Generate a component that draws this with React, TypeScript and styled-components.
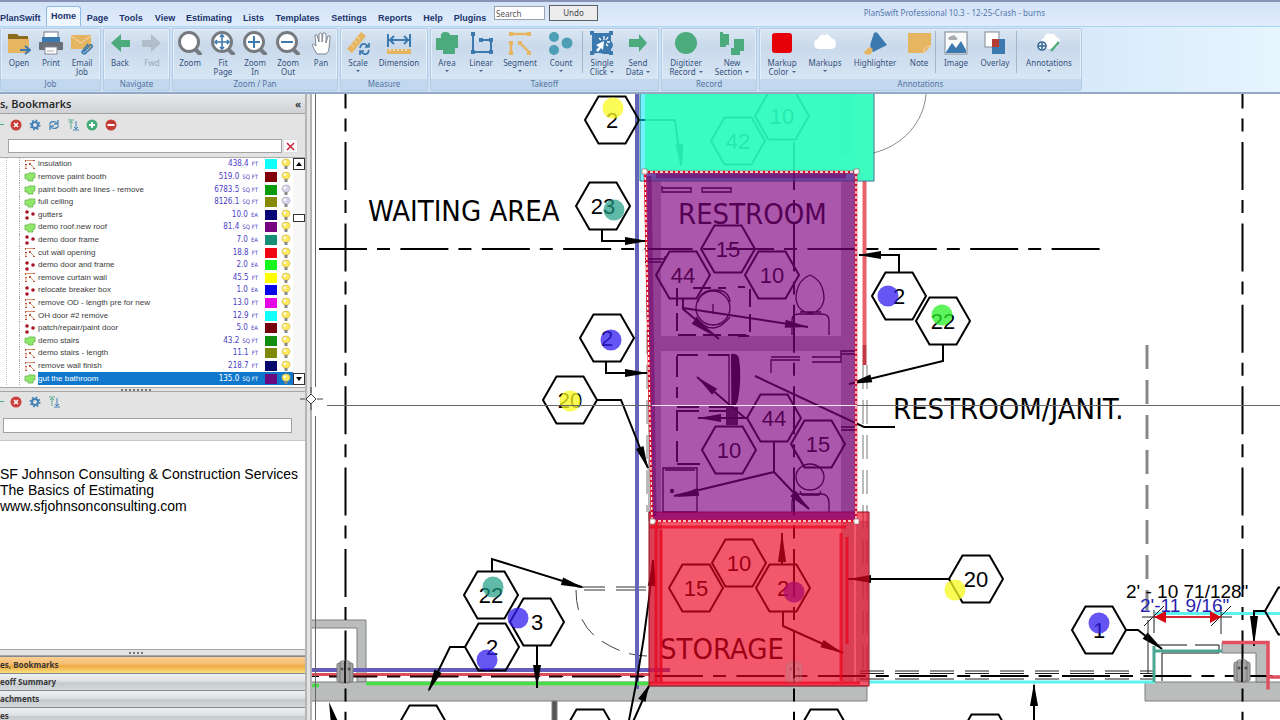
import React from "react";
import styled, { createGlobalStyle } from "styled-components";

const GlobalStyle = createGlobalStyle`
  * { box-sizing: border-box; }
  html, body, #root { height: 100%; }
  body { margin: 0; overflow: hidden; background: #fff; font-family: "Noto Sans", "Open Sans", sans-serif; }
  button, input { font: inherit; margin: 0; padding: 0; }
`;

const Page = styled.div`
  display: flex;
  flex-direction: column;
  height: 100vh;
`;

/* ---------- ribbon ---------- */
const Header = styled.header`
  flex: none;
  background: linear-gradient(#d3e2f6, #e2eefc 30%);
  border-top: 2px solid #8792b4;
  border-bottom: 2px solid #93a9c6;
`;
const TabRow = styled.div`
  display: flex;
  height: 24px;
`;
const Tabs = styled.nav`
  display: flex;
  align-items: flex-end;
`;
const Tab = styled.button<{ $active?: boolean; $flush?: boolean; $width: number }>`
  width: ${(p) => p.$width}px;
  height: ${(p) => (p.$active ? 20 : 18)}px;
  padding-bottom: ${(p) => (p.$active ? 2 : 0)}px;
  border: 1px solid ${(p) => (p.$active ? "#8fb9e6" : "transparent")};
  border-bottom: 0;
  border-left-width: ${(p) => (p.$flush ? 0 : 1)}px;
  border-radius: 3px 3px 0 0;
  background: ${(p) => (p.$active ? "#f1f7fe" : "transparent")};
  color: #20346c;
  font: bold 9px/14px "Liberation Sans", sans-serif;
  white-space: nowrap;
  display: flex;
  justify-content: ${(p) => (p.$flush ? "flex-start" : "center")};
  align-items: center;
`;
const SearchBox = styled.input`
  width: 51px;
  height: 14px;
  margin: 4px 4px 0 4px;
  padding: 0 1px;
  border: 1px solid #9aa3ae;
  background: #fff;
  font-size: 8px;
  &::placeholder { color: #555; opacity: 1; }
`;
const UndoButton = styled.button`
  width: 49px;
  height: 16px;
  margin-top: 3px;
  border: 1px solid #5c6168;
  background: #ededee;
  color: #444;
  font-size: 8px;
  line-height: 12px;
`;
const WindowTitle = styled.h1`
  flex: 1;
  margin: 0 64px 0 0;
  padding-right: 171px;
  color: #5477ab;
  font-size: 8px;
  font-weight: 400;
  line-height: 22px;
  text-align: right;
  white-space: nowrap;
`;
const Ribbon = styled.div`
  display: flex;
  gap: 2px;
  height: 66px;
  padding: 1px 0;
  border-top: 1px solid #a9d4f3;
  background: linear-gradient(90deg, #cfe0f3 70%, #d9ebfb 86%, #e6f5fe);
`;
const GroupBox = styled.section<{ $width: number }>`
  display: flex;
  flex-direction: column;
  flex: none;
  width: ${(p) => p.$width}px;
  border: 1px solid #b2cce6;
  border-radius: 2px;
  background: linear-gradient(#dbe6f2, #c9d9eb 28%, #dbe9f6 95%);
  box-shadow: inset 0 0 0 1px #e4eff9;
`;
const Tools = styled.div`
  display: flex;
  flex: 1;
  padding-top: 2px;
`;
const Caption = styled.h2`
  margin: 0;
  height: 11px;
  background: #c2d8ef;
  color: #55749f;
  font-size: 8px;
  font-weight: 400;
  line-height: 10px;
  text-align: center;
`;
const ToolButton = styled.button<{ $width: number; $dim?: boolean }>`
  display: flex;
  flex-direction: column;
  align-items: center;
  gap: 3px;
  width: ${(p) => p.$width}px;
  border: 0;
  background: none;
  color: ${(p) => (p.$dim ? "#9aa8ba" : "#34517d")};
  font-size: 8px;
  line-height: 9px;
  white-space: pre;
`;
const Divider = styled.span`
  width: 1px;
  height: 42px;
  margin: 0 1px;
  background: #a5b4c6;
`;
const Arrow = styled.i<{ $inline?: boolean }>`
  display: ${(p) => (p.$inline ? "inline-block" : "block")};
  width: 0;
  margin: ${(p) => (p.$inline ? "0 0 2px 3px" : "3px auto 0")};
  border: 2px solid transparent;
  border-top-color: #4a6288;
  border-bottom: 0;
`;

const G = "#4cab7c", B = "#3c79ae", Y = "#e5b562", K = "#777b80", T = "#4d9fb5";

const Lens = ({ children }: { children?: React.ReactNode }) => (
  <>
    <path d="M16 17 22 23" stroke={K} strokeWidth="4" strokeLinecap="round" />
    <circle cx="11" cy="11" r="9.5" fill="#fff" stroke={K} strokeWidth="3" />
    <g stroke={B} strokeWidth="1.6" fill="none">{children}</g>
  </>
);

const icons: Record<string, React.ReactNode> = {
  open: <><path d="M1 3h9l2 2h9v6H1z" fill="#8a6a1c" /><path d="M1 8h21v14H1z" fill={Y} /><path d="M13 19h9M18 15l5 4-5 4" stroke={B} strokeWidth="2.2" fill="none" /></>,
  print: <><rect x="5" y="1" width="14" height="7" fill="#fff" stroke="#778" /><path d="M3 6h18v6H3z" fill={B} /><rect y="11" width="24" height="8" rx="1" fill="#696f76" /><rect x="6" y="16" width="12" height="7" fill="#fff" stroke="#889" /><path d="M8 20h7" stroke="#aaa" /></>,
  mail: <><rect x="1" y="4" width="20" height="14" fill={Y} /><path d="m1 5 10 7 10-7" stroke="#f4dcae" fill="none" /><path d="m14 21 6-7q3-1 2 2l-6 6q-3 2-4-1l6-8" stroke={B} strokeWidth="1.6" fill="none" /></>,
  back: <path d="M3 12 13 3v6h9v7h-9v5z" fill={G} />,
  fwd: <path d="M21 12 11 3v6H2v7h9v5z" fill="#b3bdc9" />,
  zoom: <Lens />,
  fit: <Lens><path d="M11 4v14M4 11h14M9 6l2-2 2 2M9 16l2 2 2-2M6 9l-2 2 2 2M16 9l2 2-2 2" /></Lens>,
  zin: <Lens><path d="M11 5v12M5 11h12" strokeWidth="2" /></Lens>,
  zout: <Lens><path d="M5 11h12" strokeWidth="2" /></Lens>,
  pan: <path d="M8 23Q5 18 3 14q1-2 4 1L6 5q0-2 2-1l2 7V3q1-2 3 0v8l1-9q2-1 3 1v9l2-7q3-1 2 2l-1 10q0 4-3 6z" fill="#fff" stroke="#7e8791" strokeWidth="1" />,
  scale: <><path d="m1 18 14-17 5 4L6 22z" fill={Y} /><path d="m5 14 3 2m0-6 3 2m0-6 3 2" stroke="#f7dfae" /><path d="M14 17q1-5 5-4l3 2m1-3v4h-4M23 19q-1 5-5 4l-3-2m-1 3v-4h4" stroke={B} strokeWidth="1.7" fill="none" /></>,
  dim: <><path d="M1 3v13M23 3v13M2 9h20M7 5 3 9l4 4M17 5l4 4-4 4" stroke={B} strokeWidth="2" fill="none" /><path d="M0 18h24v5H0z" fill={Y} /><path d="M3 18v2m4-2v2m4-2v2m4-2v2m4-2v2" stroke="#fff" /></>,
  area: <path d="M1 7h5q-1-6 4-6t5 3h8v13h-3v6H8v-4H1z" fill={G} />,
  linear: <><path d="M4 3v18h18V9H12" stroke={B} strokeWidth="2" fill="none" /><path d="M2 1h4v4H2zM2 19h4v4H2zM20 19h4v4h-4zM20 7h4v4h-4zM10 7h4v4h-4z" fill={B} /></>,
  segment: <><path d="M3 3h18M3 12v10M11 11l10 10" stroke={Y} strokeWidth="2.400" /><path d="M1 1h4v4H1zM19 1h4v4h-4zM1 10h4v4H1zM1 20h4v4H1zM10 10h4v4h-4zM19 20h4v4h-4z" fill={Y} /></>,
  count: <g fill={T}><circle cx="5" cy="6" r="5" /><circle cx="18" cy="12" r="5.5" /><circle cx="5" cy="19" r="5" /></g>,
  click: <><path d="M2 2h19v8q4 4 0 8v5h-7q-6-2-12 0z" fill={B} /><path d="M0 0h4v4H0zM19 0h4v4h-4zM0 20h4v4H0zM19 20h4v4h-4z" fill={B} /><path d="M14 5v4m4-3-2 3m4 2h-3m1 4-2-2m-7-6 2 2" stroke="#fff" strokeWidth="1.3" /><path d="m14 10-1 9-2-2-3 4-2-2 3-3-3-2z" fill="#fff" /></>,
  send: <path d="M21 12 13 3v5H3v8h10v5z" fill={G} />,
  digitizer: <circle cx="12" cy="12" r="11" fill={G} />,
  section: <><path d="M0 1h3v2h6v11H6v2H0zM14 8h10v12h-4v4h-9v-7h3z" fill={G} /></>,
  color: <rect x="2" y="2" width="20" height="20" rx="3" fill="#e60008" />,
  cloud: <path d="M5 18q-4-1-4-5t4-5q2-6 7-4 4-2 6 3 5 1 5 6 0 4-4 5z" fill="#fff" />,
  highlighter: <><path d="M11 2q3-2 5 2l8 10-14 7q-4-5-2-10z" fill={B} /><path d="m1 21 5-5 4 2-2 5q-6 2-7-2z" fill={Y} /></>,
  note: <><path d="M1 2h23v13l-7 7H1z" fill={Y} /><path d="M17 22q-1-7 7-7" stroke="#f6dba5" fill="none" /></>,
  image: <><rect x="1" y="1" width="22" height="22" fill="#f7f9fa" stroke="#818a93" /><path d="m2 21 6-9 4 5 5-7 5 9v3H2z" fill={B} /><path d="M5 9q-2-3 2-4 4-2 5 1 3 2 0 3z" fill="#a9adb1" /></>,
  overlay: <><rect x="2" y="1" width="14" height="15" fill="#fff" stroke="#858b92" /><rect x="9" y="8" width="13" height="15" fill={B} /><rect x="9" y="8" width="7" height="8" fill="#b43e35" /></>,
  annotations: <><path d="M5 14q-3-5 2-7 2-6 7-4 4-1 5 3 5 1 4 6l-4 5-8 1z" fill="#fff" /><path d="m14 20 8-9" stroke={G} strokeWidth="2.4" /><circle cx="5" cy="15" r="4" fill="#eef4fa" stroke="#356493" strokeWidth="1.6" /><path d="M5 12v6m-3-3h6" stroke="#356493" strokeWidth="1.5" /></>,
};

type ToolSpec = { id: string; label: string; w: number; arrow?: "below" | "inline"; dim?: boolean } | null;
const groups: { name: string; width: number; tools: ToolSpec[] }[] = [
  { name: "Job", width: 101, tools: [
    { id: "open", label: "Open", w: 36 }, { id: "print", label: "Print", w: 28 }, { id: "mail", label: "Email\nJob", w: 34 }] },
  { name: "Navigate", width: 67, tools: [
    { id: "back", label: "Back", w: 32 }, { id: "fwd", label: "Fwd", w: 32, dim: true }] },
  { name: "Zoom / Pan", width: 166, tools: [
    { id: "zoom", label: "Zoom", w: 34 }, { id: "fit", label: "Fit\nPage", w: 32 }, { id: "zin", label: "Zoom\nIn", w: 32 },
    { id: "zout", label: "Zoom\nOut", w: 34 }, { id: "pan", label: "Pan", w: 32 }] },
  { name: "Measure", width: 88, tools: [
    { id: "scale", label: "Scale", w: 34, arrow: "below" }, { id: "dim", label: "Dimension", w: 48 }] },
  { name: "Takeoff", width: 229, tools: [
    { id: "area", label: "Area", w: 32, arrow: "below" }, { id: "linear", label: "Linear", w: 36, arrow: "below" },
    { id: "segment", label: "Segment", w: 42, arrow: "below" }, { id: "count", label: "Count", w: 40, arrow: "below" }, null,
    { id: "click", label: "Single\nClick", w: 36, arrow: "inline" }, { id: "send", label: "Send\nData", w: 36, arrow: "inline" }] },
  { name: "Record", width: 96, tools: [
    { id: "digitizer", label: "Digitizer\nRecord", w: 48, arrow: "inline" }, { id: "section", label: "New\nSection", w: 44, arrow: "inline" }] },
  { name: "Annotations", width: 323, tools: [
    { id: "color", label: "Markup\nColor", w: 44, arrow: "inline" }, { id: "cloud", label: "Markups", w: 42, arrow: "below" },
    { id: "highlighter", label: "Highlighter", w: 58 }, { id: "note", label: "Note", w: 30 }, null,
    { id: "image", label: "Image", w: 38 }, { id: "overlay", label: "Overlay", w: 40 }, null,
    { id: "annotations", label: "Annotations", w: 62, arrow: "below" }] },
];
const tabs: [string, number][] = [
  ["PlanSwift", 46], ["Home", 35], ["Page", 33], ["Tools", 34], ["View", 34], ["Estimating", 54], ["Lists", 35],
  ["Templates", 53], ["Settings", 50], ["Reports", 42], ["Help", 34], ["Plugins", 40],
];

/* ---------- sidebar ---------- */
const Main = styled.main`
  display: flex;
  flex: 1;
  min-height: 0;
  position: relative;
`;
const Sidebar = styled.aside`
  display: flex;
  flex-direction: column;
  flex: none;
  width: 312px;
  border-right: 7px double #b4b4b6;
  background: #e3e3e4;
`;
const PanelTitle = styled.h2`
  display: flex;
  justify-content: space-between;
  align-items: center;
  height: 20px;
  margin: 0;
  padding-right: 4px;
  border-bottom: 1px solid #a0a2a6;
  background: linear-gradient(#e9eaec, #cfd1d4);
  color: #222;
  font: 600 11px/18px "Open Sans", sans-serif;
`;
const Bar = styled.div<{ $height: number }>`
  display: flex;
  align-items: center;
  gap: 5px;
  height: ${(p) => p.$height}px;
  padding-bottom: 2px;
`;
const DashMark = styled.span`
  width: 4px;
  border-top: 1px solid #45ab77;
`;
const IconButton = styled.button`
  display: flex;
  justify-content: center;
  width: 14px;
  height: 14px;
  align-items: center;
  border: 0;
  background: none;
`;
const FilterRow = styled.div`
  display: flex;
  gap: 1px;
  height: 21px;
  padding: 2px 7px 4px 8px;
  border-bottom: 1px solid #aaa;
`;
const Field = styled.input`
  flex: 1;
  min-width: 0;
  border: 1px solid #a2a2a2;
  background: #fff;
  font-size: 9px;
`;
const ClearButton = styled.button`
  display: flex;
  justify-content: center;
  align-items: center;
  width: 15px;
  border: 1px solid #ddd;
  background: #fbfbfb;
`;
const ListArea = styled.div`
  display: flex;
  height: 229px;
  overflow: hidden;
  background: #fff;
`;
const Items = styled.ul`
  display: grid;
  grid-auto-rows: 1fr;
  flex: 1;
  height: 227px;
  margin: 0 0 0 6px;
  padding: 0 0 0 12px;
  border-left: 1px dotted #bbb;
  list-style: none;
`;
const Item = styled.li<{ $selected?: boolean }>`
  display: flex;
  align-items: center;
  gap: 2px;
  min-height: 0;
  border-left: 1px dotted #aaa;
  padding-left: 4px;
  color: ${(p) => (p.$selected ? "#fff" : "#3c3c3c")};
  font: 8px/12px "DejaVu Sans Condensed", "DejaVu Sans", sans-serif;
`;
const ItemBody = styled.div<{ $selected?: boolean }>`
  display: flex;
  flex: 1;
  align-items: center;
  height: 100%;
  background: ${(p) => (p.$selected ? "#0f78cc" : "transparent")};
`;
const ItemName = styled.span`
  flex: 1;
  white-space: nowrap;
  font-family: "Liberation Sans", sans-serif;
`;
const Amount = styled.span<{ $selected?: boolean }>`
  color: ${(p) => (p.$selected ? "#fff" : "#4a3ec4")};
  small { margin-left: 3px; font-size: 6px; }
`;
const Swatch = styled.span<{ $color: string }>`
  width: 12px;
  height: 10px;
  margin: 0 4px 0 7px;
  background: ${(p) => p.$color};
`;
const BulbSlot = styled.span`
  display: flex;
  width: 12px;
`;
const Scroll = styled.div`
  display: flex;
  flex-direction: column;
  justify-content: space-between;
  width: 12px;
  height: 227px;
  background: #f7f7f7;
`;
const ScrollButton = styled.button`
  display: flex;
  justify-content: center;
  align-items: center;
  height: 12px;
  border: 1px solid #333;
  background: #fff;
`;
const Thumb = styled.span`
  height: 8px;
  margin-bottom: 108px;
  border: 1px solid #333;
  background: #fff;
`;
const Grip = styled.div<{ $line?: boolean }>`
  display: flex;
  justify-content: center;
  align-items: center;
  height: ${(p) => (p.$line ? 7 : 5)}px;
  padding-right: 33px;
  border-top: 1px solid #a5a5a5;
  border-bottom: 1px solid #a5a5a5;
  &::after { content: ""; width: ${(p) => (p.$line ? 14 : 30)}px; border-top: 2px dotted #777; }
`;
const SecondFilter = styled.div`
  display: flex;
  height: 28px;
  padding: 5px 13px 7px 3px;
  border-bottom: 1px solid #c5c5c5;
`;
const Notes = styled.div`
  flex: 1;
  padding-top: 25px;
  background: #fff;
  color: #000;
  font: 14px/16px "Liberation Sans", Arial, sans-serif;
  white-space: nowrap;
  p { margin: 0; }
`;
const Section = styled.button<{ $active?: boolean }>`
  display: block;
  height: 18px;
  border: 0;
  border-top: 1px solid #85898d;
  background: ${(p) => (p.$active
    ? "linear-gradient(#f9cf96, #f6bc6e 45%, #f0a943 55%, #f8df7e)"
    : "linear-gradient(#eef1f3, #dde1e4 45%, #c4cacd 55%, #d5d9db)")};
  color: #383838;
  font: bold 8px/16px "Noto Sans", sans-serif;
  text-align: left;
`;
const SectionStack = styled.div`
  display: flex;
  flex-direction: column;
  height: 64px;
  overflow: hidden;
`;

type Kind = "seg" | "area" | "count";
const rows: [Kind, string, string, string, string, boolean?][] = [
  ["seg", "insulation", "438.4", "FT", "#1ff"],
  ["area", "remove paint booth", "519.0", "SQ FT", "#820007"],
  ["area", "paint booth are lines - remove", "6783.5", "SQ FT", "#0a9a0a", true],
  ["area", "full ceiling", "8126.1", "SQ FT", "#868a06", true],
  ["count", "gutters", "10.0", "EA", "#050578"],
  ["area", "demo roof.new roof", "81.4", "SQ FT", "#760280"],
  ["count", "demo door frame", "7.0", "EA", "#159077"],
  ["seg", "cut wall opening", "18.8", "FT", "#ee0712"],
  ["count", "demo door and frame", "2.0", "EA", "#18f51c"],
  ["seg", "remove curtain wall", "45.5", "FT", "#ff0"],
  ["count", "relocate breaker box", "1.0", "EA", "#0505e8"],
  ["seg", "remove OD - length pre for new", "13.0", "FT", "#e607e6"],
  ["seg", "OH door  #2 remove", "12.9", "FT", "#1ff"],
  ["count", "patch/repair/paint door", "5.0", "EA", "#75000b"],
  ["area", "demo stairs", "43.2", "SQ FT", "#118d11"],
  ["seg", "demo stairs - length", "11.1", "FT", "#7e8907"],
  ["seg", "remove wall finish", "218.7", "FT", "#08086c"],
  ["area", "gut the bathroom", "135.0", "SQ FT", "#6b0a80"],
];

const KindIcon = ({ kind }: { kind: Kind }) => (
  <svg width="12" height="11" viewBox="0 0 12 11">
    {kind === "area" && <path d="M1 3h3q1-2 4-1h3v5H9v3H4V8H1z" fill="#8ee869" stroke="#6db356" strokeWidth=".8" />}
    {kind === "count" && <g fill="#a41523"><circle cx="3" cy="3" r="1.8" /><circle cx="9" cy="5" r="1.8" /><circle cx="3" cy="9" r="1.8" /></g>}
    {kind === "seg" && <><path d="M2 1.500h8M2 5v5M6 5l4 4" stroke="#d9956f" /><path d="M1 1h1v2H1zM9 1h2v1H9zM1 5h2v1H1zM1 9h2v1H1zM5 4h2v2H5zM9 9h2v1H9z" fill="#b8583f" /></>}
  </svg>
);
const Bulb = ({ off }: { off?: boolean }) => (
  <svg width="10" height="12" viewBox="0 0 10 12">
    <path d="M3 8Q1 6.500 1 4.500 1 1 5 1t4 3.500Q9 6.500 7 8z" fill={off ? "#d9d3ea" : "#ffe95e"} stroke={off ? "#b5afc6" : "#d6bd50"} strokeWidth=".8" />
    <path d="M3.500 8h3v3h-3z" fill="#888" /><circle cx="3.800" cy="3.800" r="1.300" fill="#fff" />
  </svg>
);
const Glyph = ({ name }: { name: string }) => (
  <svg width="12" height="12" viewBox="0 0 12 12" fill="none">
    {name === "close" && <><circle cx="6" cy="6" r="5.500" fill="#c9403a" /><path d="m4 4 4 4m0-4L4 8" stroke="#fff" strokeWidth="1.600" /></>}
    {name === "gear" && <><circle cx="6" cy="6" r="4.700" stroke="#3f7fb5" strokeWidth="1.600" strokeDasharray="1.700 2" /><circle cx="6" cy="6" r="3" stroke="#3f7fb5" strokeWidth="2" /></>}
    {name === "refresh" && <path d="M1.500 5.500Q3 1 9 3.500M10 1v4H6M10.500 6.500Q9 11 3 8.500M2 11V7h4" stroke="#4583b8" strokeWidth="1.300" />}
    {name === "sort" && <><path d="M4 10V2M2 4l2-2 2 2M1 1h6" stroke="#5fae8b" /><path d="M9 2v8M7 8l2 2 2-2M6 11h6" stroke="#3f7fb5" /></>}
    {name === "add" && <><circle cx="6" cy="6" r="5.500" fill="#45ab77" /><path d="M6 3v6M3 6h6" stroke="#fff" strokeWidth="1.800" /></>}
    {name === "minus" && <><circle cx="6" cy="6" r="5.500" fill="#c43a35" /><path d="M2.500 6h7" stroke="#fff" strokeWidth="2" /></>}
  </svg>
);

/* ---------- plan ---------- */
const PlanArea = styled.section`
  flex: 1;
  min-width: 0;
  overflow: hidden;
  background: #fff;
  svg { display: block; width: 100%; height: 100%; }
`;
const Cursor = styled.svg`
  position: absolute;
  left: 299px;
  top: 291px;
`;
const RoomName = styled.text`
  font: 29px "DejaVu Sans Condensed", "DejaVu Sans", sans-serif;
`;
const Mark = styled.text`
  font: 22px "Liberation Sans", Arial, sans-serif;
  text-anchor: middle;
`;
const DimensionText = styled.text`
  font: 19px "Liberation Sans", Arial, sans-serif;
`;

const Hex = ({ x, y, n }: { x: number; y: number; n?: string }) => (
  <g>
    <path d={`M${x - 27} ${y}l13.500-23.500h27l13.500 23.500-13.500 23.500h-27z`} fill="none" stroke="#000" strokeWidth="2" />
    {n && <Mark x={x} y={y + 8}>{n}</Mark>}
  </g>
);
const Dot = ({ x, y, c }: { x: number; y: number; c: string }) => <circle cx={x} cy={y} r="10.500" fill={c} />;
const Head = ({ x, y, a, l = 23 }: { x: number; y: number; a: number; l?: number }) => (
  <path d={`M0 0-${l}-4v8z`} fill="#000" transform={`translate(${x} ${y}) rotate(${a})`} />
);
const Column = ({ x, y }: { x: number; y: number }) => (
  <g fill="#a5a5a5" stroke="#777"><rect x={x - 8} y={y - 9} width="16" height="19" rx="2" /><rect x={x - 5} y={y - 11} width="10" height="22" rx="2" fillOpacity=".5" /><circle cx={x - 3} cy={y - 3} r="1" stroke="#333" /><circle cx={x + 4} cy={y - 3} r="1" stroke="#333" /><path d={`M${x} ${y - 11}v22`} stroke="#222" strokeWidth="2" /></g>
);
const YEL = "rgba(250,250,30,.75)", TEAL = "rgba(30,155,130,.7)", BLUE = "rgba(50,30,240,.75)";

const Plan = () => (
  <svg viewBox="312 94 968 626" preserveAspectRatio="xMinYMin slice" role="img" aria-label="Floor plan">
    {/* walls */}
    <g fill="#bbbcbc" stroke="#7d7f80">
      <path d="M300 620h66v62h-9v-54h-57z" />
      <path d="M300 682h350v4h217v15H300z" />
      <path d="M1145 682h168v19h-168z" />
      <path d="M1222 643h46v39h-12v-29h-34z" />
      <path d="M552 701h5v30h-5z" fill="#555" />
    </g>
    <g fill="#b9b9bc">
      <path d="M648 172h13v349h-13zM841 172h16v349h-16zM648 172h208v9H648zM648 336h208v15H648zM648 512h208v9H648z" />
      <path d="M649 521h13v161h-13zM841 521h13v161h-13zM856 521h12v161h-12z" />
      <path d="M841 94h12v62h-12z" fill="#ddd" />
    </g>

    {/* grid lines */}
    <g stroke="#000" strokeWidth="2" strokeDasharray="48 10 13 10.400">
      <path d="M345.500 60.600V720M1242.500 60.600V720M794 142V720" />
      <path d="M319 249H1102" />
      <path d="M248 676H1280" />
    </g>
    <path d="M1147 345V610" stroke="#888" strokeWidth="3" strokeDasharray="24 11" />
    <g stroke="#777" strokeDasharray="24 11"><path d="M863 365V675M867 365V675M647 260V512" /></g>
    <g stroke="#222"><path d="M860 671H1155M860 673.500H1155M860 679H1155" strokeDasharray="24 11" /></g>
    <path d="M926 94C924 122 903 146 873 153" fill="none" stroke="#888" />
    <path d="M576 590q0 34 24 50t47 16" fill="none" stroke="#444" strokeDasharray="20 10" />
    <path d="M577 587h28m11 0h30M584 590h21m11 0h30" stroke="#333" />

    {/* takeoff runs */}
    <path d="M637 94V689" stroke="#6464b8" strokeWidth="4" />
    <path d="M312 670H670" stroke="#655dbb" strokeWidth="4" />
    <path d="M312 674.500H650" stroke="#de4d5a" strokeWidth="3" />
    <path d="M329 676.500h48m10 0h13m10 0h48m10 0h13m10 0h48m10 0h13m10 0h48m10 0h13" stroke="#200" strokeWidth="2" />
    <path d="M366 683.500H650M312 685.500h7" stroke="#45df45" strokeWidth="3.500" />
    <path d="M868 682H1155M1155 613.500H1280" stroke="#5cf3ee" strokeWidth="3" />
    <path d="M864.500 181V345" stroke="#e8626c" strokeWidth="4" />
    <path d="M864.500 345V365" stroke="#c03945" strokeWidth="4" />

    {/* restroom fixtures */}
    <g fill="none" stroke="#000" strokeWidth="1.300">
      <path d="M662 186v6h29v-4h-29m40 0h29v4h-29zM645 259h20v-3m-20 6h17" />
      <path d="M677 288v47M678 335h72v-48h-12M693 288h33m12 48h11" strokeDasharray="18 7" strokeWidth="2" />
      <circle cx="713" cy="308" r="17" /><path d="M698 302q3-12 17-12t15 12M696 317q16 22 34 0M713 304v10" />
      <path d="M810 275q-14 6-14 24 2 13 14 14 12-1 14-14 0-18-14-24M800 312h21M792 335v-15q0-6 7-6h22q8 0 8 6v15" />
      <ellipse cx="810" cy="477" rx="14" ry="13" /><path d="M800 491l2 4h17l2-4M792 512v-9q0-9 7-9h22q8 0 8 9v9" />
      <path d="M663 468h34v44h-34zM665 470h30" /><circle cx="672" cy="491" r="1.500" fill="#000" />
      <path d="M677 356v42m0 12v54M677 355h52" strokeDasharray="21 10" strokeWidth="2" />
      <path d="M729 354v53m3-52v52M771 373v-13h29m-29-3h29m12 0h29v5h-29m29-5v-6h15m-15 3h15M841 430h15m-15-3h15" />
      <path d="M677 407h22m10 0h22M677 411h22m10 0h22M677 464h23" strokeWidth="2" />
    </g>
    <path d="M731 354q6-1 8 4 3 20-1 42-2 7-6 7z" />
    <path d="M726 407h12v18h-12z" fill="#222" />

    {/* leaders */}
    <g fill="none" stroke="#000" strokeWidth="2">
      <path d="M639 120h36l6 45M602 230v11h45M606 362v11h41M597 400h24l27 68" />
      <path d="M899 272v-17h-40M943 345v16l-94 23M755 376l109 51h31" />
      <path d="M492 571v-12l90 28M465 647h-15l-21 43M537 646v42" />
      <path d="M683 299v10l36 30M683 308l125 19M774 442v30l-100 24M774 472l35 37M748 418h-50M745 418l-48-41" />
      <path d="M782 564v-31M783 612v14l60 27M949 579h-101M653 560q-7 80-25 165M632 724l17-38" />
      <path d="M1126 630h12l24 19M1265 611h-11v35M1034 725v-40" />
    </g>
    <Head x={682} y={167} a={83} /><Head x={648} y={241} a={0} /><Head x={648} y={373} a={0} /><Head x={648} y={469} a={69} />
    <Head x={858} y={255} a={180} /><Head x={849} y={384} a={166} /><Head x={584} y={588} a={17} /><Head x={428} y={692} a={116} />
    <Head x={537} y={688} a={90} /><Head x={712} y={335} a={39} /><Head x={808} y={327} a={8} /><Head x={676} y={497} a={167} />
    <Head x={809} y={510} a={46} /><Head x={698} y={418} a={180} /><Head x={697} y={377} a={220} />
    <Head x={782} y={532} a={-90} l={30} /><Head x={843} y={653} a={24} /><Head x={848} y={579} a={180} /><Head x={649} y={685} a={-65} l={17} />
    <Head x={654} y={560} a={-85} l={26} /><Head x={1163} y={650} a={39} /><Head x={1254} y={646} a={90} l={30} /><Head x={1034} y={683} a={-90} /><Head x={329} y={702} a={-105} />

    {/* keynotes */}
    <Hex x={612} y={120} n="2" /><Hex x={603} y={206} n="23" /><Hex x={607} y={338} n="2" /><Hex x={570} y={400} n="20" />
    <Hex x={491} y={595} n="22" /><Hex x={537} y={622} n="3" /><Hex x={492} y={647} n="2" />
    <Hex x={738} y={141} n="42" /><Hex x={782} y={116} n="10" />
    <Hex x={728} y={249} n="15" /><Hex x={683} y={275} n="44" /><Hex x={772} y={275} n="10" />
    <Hex x={899} y={296} n="2" /><Hex x={943} y={321} n="22" />
    <Hex x={774} y={418} n="44" /><Hex x={729} y={450} n="10" /><Hex x={818} y={444} n="15" />
    <Hex x={739} y={563} n="10" /><Hex x={696} y={588} n="15" /><Hex x={783} y={588} n="2" />
    <Hex x={976} y={579} n="20" /><Hex x={1099} y={630} n="1" />
    <Hex x={423} y={729} n="10" /><Hex x={590} y={733} /><Hex x={824} y={733} /><Hex x={985} y={738} /><Hex x={1292} y={611} />
    <Dot x={613} y={108} c={YEL} /><Dot x={614} y={210} c={TEAL} /><Dot x={611} y={340} c={BLUE} /><Dot x={570} y={401} c={YEL} />
    <Dot x={493} y={587} c={TEAL} /><Dot x={518} y={618} c={BLUE} /><Dot x={487} y={660} c={BLUE} />
    <Dot x={888} y={296} c={BLUE} /><Dot x={942} y={315} c="rgba(40,240,40,.75)" /><Dot x={794} y={592} c={BLUE} />
    <Dot x={955} y={590} c={YEL} /><Dot x={1099} y={623} c={BLUE} />

    <RoomName x="368" y="221">WAITING AREA</RoomName>
    <RoomName x="678" y="224">RESTROOM</RoomName>
    <RoomName x="893" y="419">RESTROOM/JANIT.</RoomName>
    <RoomName x="660" y="659">STORAGE</RoomName>

    {/* area takeoffs */}
    <path d="M640 94h234v87H640z" fill="rgba(0,225,255,.55)" />
    <path d="M645 94h227v77H645z" fill="rgba(45,255,180,.82)" /><path d="M857 94h16v86h-16z" fill="#3dfcc0" />
    <path d="M640 94v87h234V94" fill="none" stroke="#277" />
    <path d="M649 512h220v174H649z" fill="rgba(237,0,30,.66)" stroke="#901020" />
    <path d="M656 522v160M661 530v152M650 527h196M841 533v148M847 537v107M650 683h210" stroke="rgba(235,0,25,.7)" strokeWidth="3" fill="none" />
    <path d="M645 172h211v349H652z" fill="rgba(128,0,128,.66)" />
    <path d="M649 176l5 340M846 176h-190" stroke="rgba(110,0,100,.5)" strokeWidth="5" />
    <path d="M645 172h211v349H652z" fill="none" stroke="#e00820" strokeWidth="2.500" />
    <path d="M645 172h211v349H652z" fill="none" stroke="#fff" strokeWidth="1.300" strokeDasharray="3 2" />
    <path d="M642 169h5v5h-5zM854 169h5v5h-5zM854 519h5v5h-5zM650 519h5v5h-5z" fill="#fff" stroke="#966" strokeWidth=".7" />
    <Column x={345} y={672} /><Column x={1242} y={671} /><g opacity=".25"><Column x={794} y={672} /></g>

    {/* window at lower right */}
    <path d="M1155 645h32m8 0h24v8h-57v28" fill="none" stroke="#111" />
    <path d="M1154 646v36M1155 651h67" stroke="#4ba592" strokeWidth="3" />
    <path d="M1222 642.500h46v47M1268 677h12" stroke="#e0505e" strokeWidth="3.500" fill="none" />
    <path d="M1142 617h90M1144 626l20-20M1211 626l20-20M1154 610v23M1148 620v53M1221 607v27" stroke="#222" fill="none" />
    <path d="M1155 617h66" stroke="#e00a14" strokeWidth="1.500" />
    <path d="M1154 617l12-6v12zM1221 617l-11-6v12z" fill="#d90712" />
    <DimensionText x="1126" y="598">2' - 10 71/128"</DimensionText>
    <DimensionText x="1140" y="612" fill="#2b1fb0">2'-11 9/16"</DimensionText>

    {/* crosshair */}
    <path d="M315.500 94v293M315.500 416v304M327 405.500h325M857 405.500h423" stroke="#666" fill="none" />
    <path d="M652 405.500h205" stroke="#f3e6f3" />
  </svg>
);

export default function App() {
  return (
    <Page>
      <GlobalStyle />
      <Header>
        <TabRow>
          <Tabs>
            {tabs.map(([name, w], i) => <Tab key={name} $width={w} $flush={i === 0} $active={name === "Home"}>{name}</Tab>)}
          </Tabs>
          <SearchBox placeholder="Search" aria-label="Search" />
          <UndoButton>Undo</UndoButton>
          <WindowTitle>PlanSwift Professional 10.3 - 12-25-Crash - burns</WindowTitle>
        </TabRow>
        <Ribbon>
          {groups.map((g) => (
            <GroupBox key={g.name} $width={g.width}>
              <Tools>
                {g.tools.map((t, i) => t ? (
                  <ToolButton key={t.id} $width={t.w} $dim={t.dim}>
                    <svg width="24" height="24" viewBox="0 0 24 24" fill="none">{icons[t.id]}</svg>
                    <span>{t.label}{t.arrow && <Arrow $inline={t.arrow === "inline"} />}</span>
                  </ToolButton>
                ) : <Divider key={i} />)}
              </Tools>
              <Caption>{g.name}</Caption>
            </GroupBox>
          ))}
        </Ribbon>
      </Header>
      <Main>
        <Sidebar>
          <PanelTitle><span>s, Bookmarks</span><span>«</span></PanelTitle>
          <Bar $height={23}>
            <DashMark />
            {["close", "gear", "refresh", "sort", "add", "minus"].map((n) => <IconButton key={n} aria-label={n}><Glyph name={n} /></IconButton>)}
          </Bar>
          <FilterRow>
            <Field aria-label="Filter bookmarks" />
            <ClearButton aria-label="Clear filter"><svg width="9" height="9" viewBox="0 0 9 9"><path d="m1 1 7 7m0-7L1 8" stroke="#c9253b" strokeWidth="1.500" /></svg></ClearButton>
          </FilterRow>
          <ListArea>
            <Items>
              {rows.map(([kind, name, amount, unit, color, off]) => {
                const selected = name === "gut the bathroom";
                return (
                  <Item key={name} $selected={selected}>
                    <KindIcon kind={kind} />
                    <ItemBody $selected={selected}>
                      <ItemName>{name}</ItemName>
                      <Amount $selected={selected}>{amount}<small>{unit}</small></Amount>
                      <Swatch $color={color} />
                      <BulbSlot><Bulb off={off} /></BulbSlot>
                    </ItemBody>
                  </Item>
                );
              })}
            </Items>
            <Scroll>
              <ScrollButton aria-label="Scroll up"><svg width="6" height="4"><path d="M0 4 3 0l3 4z" /></svg></ScrollButton>
              <Thumb />
              <ScrollButton aria-label="Scroll down"><svg width="6" height="4"><path d="M0 0l3 4 3-4z" /></svg></ScrollButton>
            </Scroll>
          </ListArea>
          <Grip />
          <Bar $height={21}>
            <DashMark />
            {["close", "gear", "sort"].map((n) => <IconButton key={n} aria-label={n}><Glyph name={n} /></IconButton>)}
          </Bar>
          <SecondFilter><Field aria-label="Filter items" /></SecondFilter>
          <Notes>
            <p>SF Johnson Consulting &amp; Construction Services</p>
            <p>The Basics of Estimating</p>
            <p>www.sfjohnsonconsulting.com</p>
          </Notes>
          <Grip $line />
          <SectionStack>
            <Section $active>es, Bookmarks</Section>
            <Section>eoff Summary</Section>
            <Section>achments</Section>
            <Section>es</Section>
          </SectionStack>
        </Sidebar>
        <PlanArea><Plan /></PlanArea>
        <Cursor width="24" height="28" viewBox="0 0 24 28" fill="none" stroke="#444">
          <path d="M1 14h5M18 14h6M12 2v6M12 19v6" /><path d="m12 9 5 5-5 5-5-5z" fill="#fff" />
        </Cursor>
      </Main>
    </Page>
  );
}
